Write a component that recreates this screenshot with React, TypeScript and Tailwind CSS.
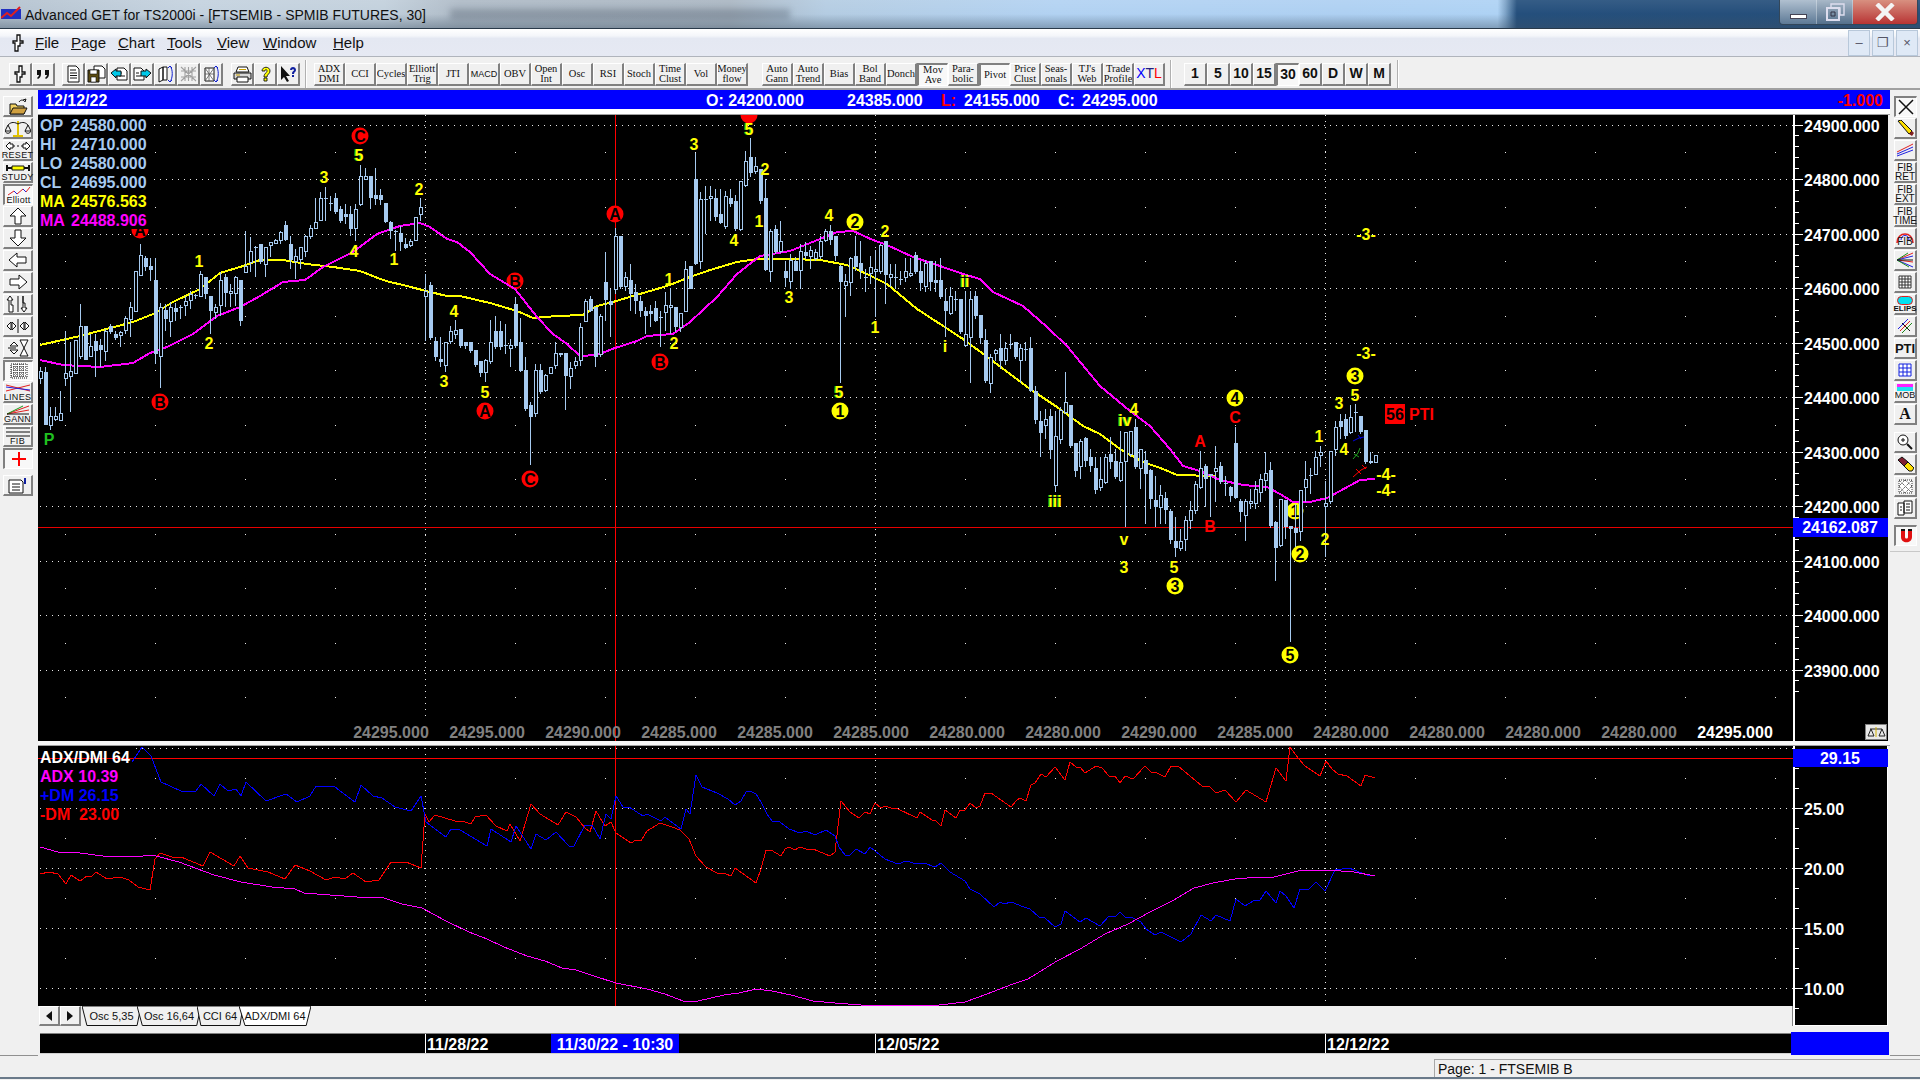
import React from "react";

const C: number[][] = [
[368,372,379,385,0],[368,373,426,426,1],[408,417,426,431,0],[408,417,420,422,0],[392,414,421,422,0],[332,374,379,387,0],[343,372,377,413,0],[341,341,374,374,0],[305,327,357,360,0],[327,327,361,361,1],
[335,347,357,358,0],[335,342,352,378,1],[340,346,351,368,1],[330,332,352,362,0],[325,327,333,335,1],[332,335,339,341,1],[332,333,336,348,0],[317,319,331,335,0],[303,308,320,338,0],[272,272,312,312,0],
[245,256,276,276,0],[257,259,268,272,1],[259,267,271,282,1],[259,281,355,365,1],[304,308,357,389,0],[305,311,320,332,1],[303,308,322,338,0],[304,309,313,322,1],[306,308,309,320,1],[297,302,306,317,0],
[292,295,301,310,0],[295,296,297,300,1],[272,275,297,298,0],[278,278,295,300,1],[297,297,312,335,1],[305,308,313,320,0],[273,281,306,317,0],[275,278,294,308,1],[285,292,294,308,0],[277,278,294,307,0],
[281,281,322,327,1],[232,267,273,274,0],[238,252,263,273,0],[247,248,249,278,1],[245,245,263,265,1],[248,248,265,278,0],[243,243,246,258,0],[240,241,244,245,0],[232,233,241,245,0],[222,226,241,242,1],
[237,245,261,270,1],[250,257,262,280,0],[248,248,260,270,0],[236,237,252,258,0],[226,229,237,240,0],[199,223,229,229,0],[193,199,221,222,0],[188,199,200,222,1],[197,204,205,212,1],[194,199,213,215,1],
[207,210,222,224,1],[205,215,218,225,1],[207,215,230,237,1],[205,210,229,242,0],[166,177,205,207,0],[169,177,180,181,0],[177,177,199,210,1],[169,196,200,206,1],[190,196,201,206,1],[204,204,223,224,1],
[222,223,232,240,1],[231,232,233,252,1],[227,234,243,252,1],[239,245,249,250,1],[240,242,246,248,0],[218,218,241,241,0],[199,208,215,222,0],[275,292,297,342,0],[283,286,339,341,1],[338,342,358,362,1],
[338,360,363,368,1],[343,343,366,373,0],[327,332,342,345,0],[321,331,335,340,0],[330,330,347,349,1],[343,343,347,350,1],[343,343,352,354,1],[351,351,366,368,1],[362,362,374,378,1],[360,361,373,383,0],
[321,343,362,365,0],[317,332,348,350,1],[322,332,348,351,1],[325,346,347,355,1],[340,346,349,368,0],[298,305,347,349,1],[319,343,372,373,1],[358,371,410,412,1],[403,406,418,466,1],[365,371,414,418,0],
[365,371,393,395,1],[375,376,391,393,0],[368,368,374,375,0],[343,354,366,370,0],[354,354,356,358,1],[354,354,377,411,1],[363,369,377,390,0],[358,362,366,370,0],[324,328,361,367,0],[300,302,322,323,0],
[297,300,312,313,1],[308,308,358,368,1],[315,317,355,358,0],[253,283,301,322,1],[290,302,306,338,1],[229,237,290,295,0],[237,237,288,290,1],[273,278,287,292,0],[265,281,295,312,1],[285,293,302,315,1],
[297,302,312,318,1],[308,312,317,335,1],[306,312,315,328,1],[302,309,322,323,1],[312,318,319,348,1],[293,306,313,332,0],[289,306,308,335,0],[308,308,328,333,1],[314,314,328,333,0],[262,270,312,312,0],
[267,267,290,290,1],[154,180,265,266,1],[193,200,262,270,0],[187,200,201,235,1],[187,197,199,222,0],[190,199,218,222,1],[190,215,224,225,1],[192,197,227,230,0],[190,199,205,208,1],[196,202,230,232,1],
[182,182,230,232,0],[152,162,186,188,0],[139,158,174,178,1],[158,167,172,175,0],[170,170,202,205,1],[180,199,271,272,1],[230,232,272,283,0],[226,230,253,255,1],[222,242,252,254,0],[262,272,279,288,1],
[255,261,282,290,0],[258,262,272,272,1],[245,252,271,290,0],[243,253,257,260,1],[247,251,257,270,0],[250,253,259,262,0],[237,242,257,260,0],[230,232,241,243,0],[226,232,241,246,1],[237,237,257,262,1],
[266,267,283,384,1],[275,282,286,318,0],[258,259,283,297,0],[237,257,268,272,1],[242,264,272,280,1],[270,278,279,293,1],[257,268,274,285,0],[251,270,272,318,0],[245,246,272,275,0],[242,242,276,305,1],
[265,275,278,288,0],[265,278,279,290,1],[272,280,281,286,1],[259,272,278,283,0],[259,274,276,278,0],[253,256,273,275,1],[262,272,284,292,1],[261,264,287,293,0],[262,262,283,292,1],[262,281,284,293,1],
[259,281,298,300,1],[290,302,312,338,1],[288,297,314,316,0],[292,300,301,312,1],[300,300,333,335,1],[292,335,346,348,0],[292,300,338,384,0],[292,297,317,320,1],[316,316,339,345,1],[330,341,382,384,1],
[355,358,384,394,0],[350,351,354,362,0],[335,349,362,370,1],[343,349,361,366,0],[335,345,346,350,1],[343,343,358,360,1],[345,349,361,384,0],[343,350,351,362,1],[338,349,392,393,1],[387,392,421,425,1],
[412,422,434,458,1],[410,420,426,440,0],[410,417,451,460,1],[412,437,486,493,0],[408,411,440,445,0],[373,403,413,415,0],[406,406,447,449,1],[444,444,472,478,1],[440,442,467,480,0],[438,439,462,468,1],
[450,458,467,473,1],[458,469,491,495,1],[458,480,488,492,0],[455,458,483,485,0],[438,455,463,470,1],[450,462,478,480,1],[432,463,481,483,0],[433,433,462,528,0],[432,432,455,458,0],[420,428,468,470,1],
[450,450,469,490,0],[452,461,475,525,1],[470,471,500,510,1],[477,501,508,528,1],[486,496,508,525,0],[493,499,511,525,1],[510,512,541,545,1],[518,542,549,558,1],[530,542,549,552,0],[517,521,540,552,0],
[502,511,521,530,0],[482,485,511,515,0],[452,469,488,490,0],[465,467,480,508,1],[475,475,477,518,1],[447,469,472,503,0],[463,467,483,485,1],[477,484,485,497,1],[487,488,497,503,1],[428,444,499,500,1],
[500,502,513,523,1],[500,502,516,542,0],[490,502,504,510,0],[482,490,504,510,0],[475,480,493,503,0],[453,474,481,492,0],[463,471,527,529,1],[522,523,549,582,1],[500,500,546,548,0],[501,501,528,540,1],
[527,527,530,643,1],[505,529,534,548,1],[491,491,532,542,0],[462,480,488,503,0],[469,476,477,495,1],[452,458,475,475,0],[447,453,456,468,0],[482,504,507,558,0],[452,452,502,505,0],[422,428,450,457,0],
[415,422,428,440,1],[415,420,437,440,1],[406,418,433,435,0],[405,413,414,433,1],[417,417,433,435,1],[431,431,463,465,1],[453,462,464,465,1],[456,456,463,464,0],
];

const YEL = "40,346 80,337 133,323 153,315 173,303 200,290 220,274 240,268 260,261 283,261 307,265 333,268 360,272 383,281 390,283 407,287 430,293 447,297 460,297 490,304 517,312 533,319 557,317 583,316 597,307 613,303 633,297 667,287 690,278 710,271 737,263 757,260 790,260 820,261 847,266 867,275 887,285 917,310 937,323 963,340 990,360 1030,390 1057,408 1083,427 1100,435 1120,450 1143,463 1163,470 1177,476 1215,477";
const MAG = "40,361 63,366 100,368 133,364 150,354 167,348 193,335 217,317 240,308 260,297 283,283 305,281 323,268 353,253 377,235 400,227 420,224 430,228 447,240 457,243 470,253 490,275 515,290 537,318 553,335 567,345 580,357 597,356 615,349 637,342 647,337 673,335 690,323 717,298 737,275 760,257 790,252 820,240 837,233 853,232 873,241 887,246 913,258 940,267 963,275 980,280 993,293 1023,307 1047,328 1067,347 1100,387 1130,412 1150,427 1170,450 1183,467 1200,472 1220,481 1243,486 1267,488 1280,495 1293,503 1310,503 1327,499 1340,492 1360,481 1375,480";

const ADX = "40,848 58,853 80,854 103,857 134,858 152,856 179,863 214,876 241,883 272,888 295,890 304,894 330,896 357,898 384,899 402,905 422,909 446,922 469,933 487,940 504,948 527,957 545,962 562,969 576,971 594,977 616,984 647,990 665,995 683,1002 698,1002 724,996 739,994 756,990 772,992 791,996 813,1002 835,1004 861,1006 902,1006 939,1006 965,1003 987,995 1013,985 1028,980 1057,962 1080,950 1105,935 1128,925 1150,913 1172,902 1194,889 1213,884 1235,880 1247,879 1274,878 1298,872 1327,871 1354,873 1375,877";
const BLUE = "132,763 142,748 151,757 161,783 181,792 196,792 201,785 214,797 220,785 228,792 236,790 241,797 246,783 266,802 286,795 297,803 310,797 316,787 335,788 355,803 361,786 373,797 382,799 395,808 411,812 421,797 426,823 446,838 451,830 460,831 487,847 491,830 511,843 516,827 531,850 536,835 546,841 556,833 569,847 574,847 585,826 592,826 600,840 606,815 611,820 616,797 623,808 629,808 643,817 647,815 661,822 665,818 681,830 686,810 690,815 696,776 702,788 717,794 728,800 735,806 741,802 746,793 750,792 756,795 761,803 767,815 772,822 780,823 789,830 800,834 806,832 815,836 826,831 835,837 839,848 845,856 850,856 856,850 865,855 870,848 885,860 898,865 906,862 917,865 924,864 935,868 941,864 950,873 965,882 970,890 980,895 994,908 1000,903 1004,905 1011,903 1024,908 1030,910 1039,918 1044,918 1055,928 1061,925 1065,912 1080,923 1086,919 1100,927 1109,917 1115,918 1120,913 1126,919 1131,918 1141,923 1146,930 1155,936 1161,933 1181,943 1191,935 1201,916 1211,922 1216,916 1230,922 1236,900 1245,907 1253,902 1260,901 1266,892 1276,904 1280,892 1286,897 1294,909 1300,890 1309,890 1316,883 1325,892 1335,871 1349,869 1367,876 1375,877";
const RED = "40,875 49,873 58,875 66,885 71,876 80,882 87,877 91,878 96,873 107,880 120,878 129,881 138,888 150,891 155,860 160,854 172,858 181,858 203,867 210,853 234,867 240,857 248,869 268,873 285,880 295,866 310,872 326,881 335,878 345,880 353,874 366,883 379,881 391,863 406,863 421,869 425,815 429,823 435,816 455,822 462,822 471,825 475,818 486,816 496,827 507,832 510,825 520,842 531,805 540,815 558,826 566,813 576,818 585,829 590,833 596,812 605,827 611,823 616,834 631,844 636,841 641,842 647,832 660,824 672,828 680,831 689,840 696,857 706,868 717,874 726,875 731,877 735,869 756,884 761,870 766,851 771,851 781,857 785,850 789,848 795,851 800,848 806,850 813,850 830,857 835,853 841,802 850,813 859,819 865,813 870,815 875,804 881,809 885,807 891,809 896,809 917,819 920,813 932,821 936,822 941,827 945,811 956,819 960,811 965,811 970,804 976,809 980,807 985,794 991,794 1011,808 1017,801 1020,799 1026,802 1031,786 1035,784 1041,775 1046,778 1055,768 1065,781 1070,763 1076,768 1080,768 1085,774 1096,767 1102,769 1109,777 1115,777 1120,784 1125,777 1133,780 1145,767 1151,773 1155,773 1165,778 1171,767 1178,767 1202,787 1209,787 1216,794 1225,791 1236,803 1246,791 1266,803 1276,769 1286,782 1290,748 1298,759 1305,767 1320,777 1326,762 1332,770 1338,775 1347,777 1361,787 1365,776 1375,779";

const L: [number, number, string, string][] = [
[80,191,"A","r"],[140,231,"A","r"],[160,403,"B","r"],[360,137,"C","r"],[515,282,"B","r"],[485,412,"A","r"],[530,480,"C","r"],[615,215,"A","r"],[660,363,"B","r"],[749,116,"","r"],
[49,440,"P","p"],[199,262,"1","y"],[209,344,"2","y"],[324,178,"3","y"],[354,252,"4","y"],[359,156,"5","g"],[394,260,"1","y"],[419,190,"2","y"],[444,382,"3","y"],[454,312,"4","y"],[485,393,"5","y"],
[674,344,"2","y"],[669,280,"1","y"],[694,145,"3","y"],[749,130,"5","g"],[765,170,"2","y"],[734,241,"4","y"],[759,222,"1","y"],[789,298,"3","y"],[829,216,"4","y"],[885,232,"2","y"],[839,393,"5","g"],[875,328,"1","y"],
[965,282,"ii","g"],[945,347,"i","y"],[1055,502,"iii","g"],[1125,421,"iv","g"],[1134,410,"4","y"],[1124,540,"v","y"],[1124,568,"3","y"],[1174,568,"5","y"],
[855,223,"2","c"],[840,412,"1","c"],[1175,587,"3","c"],[1235,399,"4","c"],[1295,512,"1","c"],[1300,555,"2","c"],[1290,656,"5","c"],[1355,377,"3","c"],
[1200,442,"A","R"],[1210,527,"B","R"],[1235,418,"C","R"],[1325,540,"2","y"],[1319,437,"1","y"],[1339,404,"3","y"],[1344,450,"4","y"],[1355,396,"5","y"],
[1366,235,"-3-","y"],[1366,354,"-3-","y"],[1386,475,"-4-","y"],[1386,491,"-4-","y"],
];

const BOT = ["24295","24295","24290","24285","24285","24285","24280","24280","24290","24285","24280","24280","24280","24280"];
const LEG: [string, string, string][] = [["OP","24580.000","#a6caf0"],["HI","24710.000","#a6caf0"],["LO","24580.000","#a6caf0"],["CL","24695.000","#a6caf0"],["MA","24576.563","#ffff00"],["MA","24488.906","#ff00ff"]];
const PRICE_Y = Array.from({ length: 11 }, (_, i) => 125.5 + i * 54.5);
const HALF_Y = Array.from({ length: 11 }, (_, i) => 153 + i * 54.5);
const F = '"Liberation Sans", Arial, sans-serif';

function Chart() {
  return (
    <svg width={1755} height={626} viewBox="38 116 1755 626" className="block bg-black shrink-0" style={{ fontFamily: F }}>
      {PRICE_Y.map((y) => <line key={y} x1={40} x2={1793} y1={Math.round(y) + 0.5} y2={Math.round(y) + 0.5} stroke="#e8e8e8" strokeDasharray="1 5" />)}
      {HALF_Y.map((y) => <line key={y} x1={65} x2={1793} y1={Math.round(y) + 0.5} y2={Math.round(y) + 0.5} stroke="#e8e8e8" strokeDasharray="1 89" />)}
      {[425, 875, 1325].map((x) => <line key={x} x1={x + 0.5} x2={x + 0.5} y1={116} y2={720} stroke="#e8e8e8" strokeDasharray="1 5" />)}
      <line x1={615.5} x2={615.5} y1={116} y2={742} stroke="#ff0000" />
      <line x1={38} x2={1793} y1={528.5} y2={528.5} stroke="#e80000" />
      {L.filter((l) => l[3] === "c" || l[3] === "r").map(([x, y, t, k], i) => (
        <g key={i}>
          <circle cx={x} cy={y} r={8.5} fill={k === "c" ? "#ffff00" : "#ff0000"} />
          <text x={x} y={y + 6} textAnchor="middle" fontSize={16} fontWeight={700} fill="#000">{t}</text>
        </g>
      ))}
      <g shapeRendering="crispEdges">
        <polyline points={YEL} fill="none" stroke="#ffff00" strokeWidth={2} />
        <polyline points={MAG} fill="none" stroke="#ff00ff" strokeWidth={2} />
        {C.map(([h, t, b, l, f], i) => {
          const x = 40 + i * 5;
          return (
            <g key={i}>
              <line x1={x + 0.5} x2={x + 0.5} y1={h} y2={l} stroke="#a6caf0" />
              {f ? <rect x={x - 1} y={t} width={4} height={Math.max(b - t, 1)} fill="#a6caf0" /> : <rect x={x - 0.5} y={t + 0.5} width={3} height={Math.max(b - t, 1)} fill="#000" stroke="#a6caf0" />}
            </g>
          );
        })}
      </g>
      {L.filter((l) => !"cr".includes(l[3])).map(([x, y, t, k], i) => (
        <g key={i} textAnchor="middle" fontSize={16} fontWeight={700}>
          {k === "g" && <text x={x - 1} y={y + 6} fill="#20c020">{t}</text>}
          <text x={x} y={y + 6} fill={k === "R" ? "#ff0000" : k === "p" ? "#20c020" : "#ffff00"}>{t}</text>
        </g>
      ))}
      <g strokeWidth={1} fill="none">
        <path d="M1353 442l6-3 5-1M1358 436l3 4" stroke="#0000e0" />
        <path d="M1353 460l5-6 2-5M1354 455l5 3" stroke="#20a020" />
        <path d="M1353 478l8-7 6-3M1356 470l5 5M1362 466l4 4" stroke="#ff0000" />
      </g>
      <rect x={1385} y={405} width={20} height={20} fill="#ff0000" />
      <text x={1395} y={421} textAnchor="middle" fontSize={16} fontWeight={700} fill="#000">56</text>
      <text x={1409} y={421} fontSize={16} fontWeight={700} fill="#ff0000">PTI</text>
      <rect x={38} y={116} width={114} height={114} fill="#000" />
      {LEG.map(([a, b, c], i) => (
        <g key={i} fontSize={16} fontWeight={700} fill={c}>
          <text x={40} y={132 + i * 19}>{a}</text>
          <text x={71} y={132 + i * 19}>{b}</text>
        </g>
      ))}
      {BOT.map((t, i) => <text key={i} x={391 + i * 96} y={739} textAnchor="middle" fontSize={16} fontWeight={700} fill="#808080">{t}.000</text>)}
      <text x={1735} y={739} textAnchor="middle" fontSize={16} fontWeight={700} fill="#fff">24295.000</text>
    </svg>
  );
}

function Indicator() {
  return (
    <svg width={1755} height={260} viewBox="38 747 1755 260" className="block bg-black shrink-0" style={{ fontFamily: F }}>
      {[749, 809, 869, 929, 989].map((y) => <line key={y} x1={40} x2={1793} y1={y + 0.5} y2={y + 0.5} stroke="#e8e8e8" strokeDasharray="1 5" />)}
      {[779, 839, 899, 959].map((y) => <line key={y} x1={65} x2={1793} y1={y + 0.5} y2={y + 0.5} stroke="#e8e8e8" strokeDasharray="1 89" />)}
      {[425, 875, 1325].map((x) => <line key={x} x1={x + 0.5} x2={x + 0.5} y1={749} y2={1003} stroke="#e8e8e8" strokeDasharray="1 5" />)}
      <line x1={615.5} x2={615.5} y1={747} y2={1007} stroke="#ff0000" />
      <line x1={38} x2={1793} y1={759.5} y2={759.5} stroke="#ff0000" />
      <g shapeRendering="crispEdges" fill="none">
        <polyline points={RED} stroke="#ff0000" />
        <polyline points={BLUE} stroke="#0000ff" />
        <polyline points={ADX} stroke="#ff00ff" />
      </g>
      <rect x={38} y={749} width={94} height={10} fill="#000" />
      <g fontSize={16} fontWeight={700}>
        <text x={40} y={764} fill="#fff">ADX/DMI 64</text>
        <text x={40} y={783} fill="#ff00ff">ADX 10.39</text>
        <text x={40} y={802} fill="#0000ff">+DM 26.15</text>
        <text x={40} y={821} fill="#ff0000">-DM</text>
        <text x={79} y={821} fill="#ff0000">23.00</text>
      </g>
    </svg>
  );
}

function PriceAxis() {
  const minor = Array.from({ length: 56 }, (_, i) => 125.5 + i * 10.9);
  return (
    <svg width={95} height={626} viewBox="1793 116 95 626" className="block bg-black shrink-0" style={{ fontFamily: F }}>
      <line x1={1794} x2={1794} y1={116} y2={742} stroke="#fff" strokeWidth={2} />
      {minor.map((y, i) => <line key={i} x1={1795} x2={i % 5 === 0 ? 1803 : 1799} y1={Math.round(y) + 0.5} y2={Math.round(y) + 0.5} stroke="#fff" />)}
      {PRICE_Y.map((y, i) => <text key={i} x={1804} y={y + 7} fontSize={16} fontWeight={700} fill="#fff">{24900 - i * 100}.000</text>)}
      <rect x={1793} y={519} width={95} height={19} fill="#0000ff" />
      <text x={1840} y={534} textAnchor="middle" fontSize={16} fontWeight={700} fill="#fff">24162.087</text>
      <rect x={1793} y={700} width={95} height={42} fill="#000" />
      <line x1={1794} x2={1794} y1={700} y2={742} stroke="#fff" strokeWidth={2} />
      <rect x={1865.5} y={725.5} width={21} height={15} fill="#e8e8e8" stroke="#808080" />
      <path d="M1868 737l3-7 3 7zM1879 737l3-7 3 7zM1870 730h12" fill="none" stroke="#222" />
      <line x1={1876} x2={1876} y1={728} y2={738} stroke="#d0b000" />
    </svg>
  );
}

function OscAxis() {
  const t = Array.from({ length: 14 }, (_, i) => 769 + i * 20);
  return (
    <svg width={95} height={280} viewBox="1793 747 95 280" className="block bg-black shrink-0" style={{ fontFamily: F }}>
      <line x1={1794} x2={1794} y1={747} y2={1027} stroke="#fff" strokeWidth={2} />
      <line x1={1887.5} x2={1887.5} y1={747} y2={1027} stroke="#fff" />
      <line x1={1793} x2={1888} y1={1026.5} y2={1026.5} stroke="#fff" />
      {t.map((y) => <line key={y} x1={1795} x2={[809, 869, 929, 989].includes(y) ? 1803 : 1799} y1={y + 0.5} y2={y + 0.5} stroke="#fff" />)}
      {[["25.00", 809], ["20.00", 869], ["15.00", 929], ["10.00", 989]].map(([s, y]) => <text key={s} x={1804} y={(y as number) + 7} fontSize={16} fontWeight={700} fill="#fff">{s}</text>)}
      <rect x={1793} y={750} width={95} height={18} fill="#0000ff" />
      <text x={1840} y={765} textAnchor="middle" fontSize={16} fontWeight={700} fill="#fff">29.15</text>
    </svg>
  );
}

const raised = "border-t border-l border-t-white border-l-white border-r-2 border-b-2 border-r-[#808080] border-b-[#808080] bg-[#f0f0f0]";
const sunken = "border-t-2 border-l-2 border-t-[#808080] border-l-[#808080] border-r border-b border-r-white border-b-white bg-[#f8f8f8]";

const S = (p: { w?: number; h?: number; vb?: string; children: React.ReactNode }) => (
  <svg width={p.w ?? 19} height={p.h ?? 18} viewBox={p.vb ?? "0 0 19 18"} className="block shrink-0">{p.children}</svg>
);

const Pin = ({ h = 18 }: { h?: number }) => (
  <S w={12} h={h} vb="0 0 12 18"><path d="M5 1h3v6h3v2H8v3H6v5H3V9H1V7h4z" fill="#fff" stroke="#111" strokeWidth={1.3} /></S>
);
const Quote = () => <S><path d="M3 5h4v4c0 2-1 4-3 5l-1-1c1-1 2-2 2-3H3zM11 5h4v4c0 2-1 4-3 5l-1-1c1-1 2-2 2-3h-2z" fill="#111" /></S>;
const Doc = () => <S><path d="M4 1h8l3 3v13H4z" fill="#fff" stroke="#111" /><path d="M6 5h6M6 8h7M6 10.500h7M6 13h7" stroke="#111" /></S>;
const Save = () => <S><path d="M7 1h8l3 3v9H7z" fill="#fff" stroke="#111" /><path d="M1 5h11v12H1z" fill="#5a4a10" stroke="#111" /><path d="M3 5h7v4H3zM4 12h5v5H4z" fill="#fff" stroke="#111" strokeWidth={0.6} /></S>;
const ArrL = () => <S><path d="M7 3h7l3 3v9H7z" fill="#fff" stroke="#111" /><path d="M9 8h3M9 11h6" stroke="#111" /><path d="M1 8l5-4v2h5v5H6v2z" fill="#00c8e8" stroke="#111" /></S>;
const ArrR = () => <S><path d="M1 3h7l3 3v9H1z" fill="#fff" stroke="#111" /><path d="M3 8h3M3 11h5" stroke="#111" /><path d="M18 8l-5-4v2H8v5h5v2z" fill="#00c8e8" stroke="#111" /></S>;
const Book = () => <S><path d="M3 4l4-2v13l-4 2zM7 2h4v13H7z" fill="#fff" stroke="#111" /><path d="M14 1c3 3 3 12 0 16M12 3l2-2 2 2M12 15l2 2 2-2" fill="none" stroke="#1020d0" /></S>;
const GrayGrid = () => <S><path d="M2 2l15 14M17 2L2 16M2 6l15 0M2 12l15 0M6 2l0 14M13 2l0 14M9.500 2l0 14" stroke="#a0a0a0" strokeWidth={1.1} fill="none" /></S>;
const Book2 = () => <S><path d="M3 3h9v13H3z" fill="#fff" stroke="#111" /><path d="M3 3l9 13M12 3L3 16M3 9h9M7 3v13" stroke="#555" strokeWidth={0.8} /><path d="M14 1c3 3 3 12 0 16M12 3l2-2 2 2M12 15l2 2 2-2" fill="none" stroke="#1020d0" /></S>;
const Print = () => <S><path d="M5 2h9l2 5H3z" fill="#fff" stroke="#111" /><path d="M1 8h17v6H1z" fill="#d8d8d8" stroke="#111" /><path d="M4 12h11v5H4z" fill="#fff" stroke="#111" /><path d="M6 4.500h7M3 10h4" stroke="#c8a000" /></S>;
const Help = () => <S><path d="M6 6c0-5 8-5 8 0 0 3-3 3-3 6H8c0-4 3-4 3-6s-2-2-2 0zM8 13h3v3H8z" fill="#ffff00" stroke="#111" strokeWidth={0.9} /></S>;
const WhatsThis = () => <S><path d="M2 1v14l3-3 3 5 2-1-3-5h4z" fill="#111" /><path d="M11 5c0-4 6-4 6 0 0 2-2 2-2 4h-2c0-3 2-3 2-4s-2-1-2 0zM13 10h2v2h-2z" fill="#1020a0" /></S>;

function IconBtn({ children, w = "w-[23px]", pressed }: { children: React.ReactNode; w?: string; pressed?: boolean }) {
  return <div className={`${w} h-[23px] flex items-center justify-center shrink-0 ${pressed ? sunken : raised}`}>{children}</div>;
}
function TxtBtn({ l, pressed, small }: { l: string[]; pressed?: boolean; small?: boolean }) {
  return (
    <div className={`w-[31px] h-[23px] flex flex-col items-center justify-center shrink-0 overflow-hidden leading-[10px] text-[#111] ${small ? "text-[9px] font-['Liberation_Sans',sans-serif]" : "text-[10.5px] font-['Liberation_Serif',serif]"} ${pressed ? sunken : raised}`}>
      {l.map((t) => <span key={t}>{t}</span>)}
    </div>
  );
}
const Sep = ({ ml }: { ml: string }) => <div className={`${ml} w-[2px] h-[28px] border-l border-l-[#b0b0b0] border-r border-r-white shrink-0`} />;

const T1: [string[], boolean?][] = [[["ADX", "DMI"]], [["CCI"]], [["Cycles"]], [["Elliott", "Trig"]], [["JTI"]], [["MACD"]], [["OBV"]], [["Open", "Int"]], [["Osc"]], [["RSI"]], [["Stoch"]], [["Time", "Clust"]], [["Vol"]], [["Money", "flow"]]];
const T2: [string[], boolean?][] = [[["Auto", "Gann"]], [["Auto", "Trend"]], [["Bias"]], [["Bol", "Band"]], [["Donch"]], [["Mov", "Ave"], true], [["Para-", "bolic"]], [["Pivot"], true], [["Price", "Clust"]], [["Seas-", "onals"]], [["TJ's", "Web"]], [["Trade", "Profile"]]];
const NUMS = ["1", "5", "10", "15", "30", "60", "D", "W", "M"];

function Toolbar() {
  return (
    <div className="h-[33px] pt-[3px] bg-[#f0f0f0] flex items-center shrink-0 border-b-2 border-b-[#a0a0a0]">
      <div className="ml-[9px] flex"><IconBtn><Pin /></IconBtn><IconBtn><Quote /></IconBtn></div>
      <div className="ml-[7px] flex">
        <IconBtn><Doc /></IconBtn><IconBtn><Save /></IconBtn><IconBtn><ArrL /></IconBtn><IconBtn><ArrR /></IconBtn><IconBtn><Book /></IconBtn><IconBtn><GrayGrid /></IconBtn><IconBtn><Book2 /></IconBtn>
      </div>
      <div className="ml-[8px] flex"><IconBtn><Print /></IconBtn><IconBtn><Help /></IconBtn><IconBtn><WhatsThis /></IconBtn></div>
      <Sep ml="ml-[5px]" />
      <div className="ml-[7px] flex">{T1.map(([l, p]) => <TxtBtn key={l[0]} l={l} pressed={p} small={l[0] === "MACD"} />)}</div>
      <div className="ml-[14px] flex">
        {T2.map(([l, p]) => <TxtBtn key={l[0] + l[1]} l={l} pressed={p} />)}
        <div className={`w-[31px] h-[23px] flex items-center justify-center shrink-0 text-[14px] font-['Liberation_Sans',sans-serif] ${raised}`}>
          <span className="text-[#0000ff]">X</span><span className="text-[#202080]">T</span><span className="text-[#ff0000]">L</span>
        </div>
      </div>
      <Sep ml="ml-[5px]" />
      <div className="ml-[12px] flex">
        {NUMS.map((n) => <div key={n} className={`w-[23px] h-[23px] flex items-center justify-center shrink-0 text-[14px] font-bold text-[#111] font-['Liberation_Sans',sans-serif] ${n === "30" ? sunken : raised}`}>{n}</div>)}
      </div>
      <Sep ml="ml-[6px]" />
    </div>
  );
}

const lab = "text-[9px] leading-[9px] text-[#111] font-['Liberation_Sans',sans-serif] tracking-[0.3px]";
const Cap = ({ t, children }: { t: string; children: React.ReactNode }) => <div className="flex flex-col items-center">{children}<span className={lab}>{t}</span></div>;

const Left: [React.ReactNode, boolean?][] = [
  [<S w={20} h={17} vb="0 0 20 17"><path d="M2 6h6l1 2h7v8H2z" fill="#f0d060" stroke="#111" /><path d="M2 16l3-6h14l-3 6z" fill="#d0a040" stroke="#111" /><path d="M11 4c2-3 5-2 6 0M17 4l1-3-3 1" fill="none" stroke="#111" /></S>],
  [<S w={26} h={17} vb="0 0 26 17"><path d="M13 1v14M8 16h10" stroke="#e0c000" strokeWidth={2} /><path d="M13 4C8 1 5 3 3 5M13 4c5-3 8-1 10 1M3 5l-3 6h6zM23 5l-3 6h6zM0 11c1 3 5 3 6 0M20 11c1 3 5 3 6 0" fill="none" stroke="#111" /></S>],
  [<Cap t="RESET"><S w={26} h={10} vb="0 0 26 10"><path d="M1 5l4-4v2h3v4H5v2zM25 5l-4-4v2h-3v4h3v2z" fill="#fff" stroke="#111" /><path d="M8 5h10" stroke="#111" strokeDasharray="2 2" /></S></Cap>],
  [<Cap t="STUDY"><S w={26} h={10} vb="0 0 26 10"><path d="M2 2v6M24 2v6M2 5h22" stroke="#111" strokeWidth={2} /><path d="M7 3h12v4H7z" fill="#ffff00" stroke="#111" /></S></Cap>],
  [<Cap t="Elliott"><S w={26} h={10} vb="0 0 26 10"><path d="M2 9l6-4 3 3 6-5 3 3 4-5" fill="none" stroke="#e02020" /><path d="M8 5l3 3M20 6l-3-3" stroke="#2020e0" /></S></Cap>, true],
  [<S w={20} h={18} vb="0 0 20 18"><path d="M10 1l8 8h-5v8H7V9H2z" fill="#fff" stroke="#111" /></S>],
  [<S w={20} h={18} vb="0 0 20 18"><path d="M10 17l8-8h-5V1H7v8H2z" fill="#fff" stroke="#111" /></S>],
  [<S w={20} h={18} vb="0 0 20 18"><path d="M1 9l8-7v4h9v6H9v4z" fill="#fff" stroke="#111" /></S>],
  [<S w={20} h={18} vb="0 0 20 18"><path d="M19 9l-8-7v4H2v6h9v4z" fill="#fff" stroke="#111" /></S>],
  [<S w={24} h={18} vb="0 0 24 18"><path d="M3 17V5H1l3-4 3 4H5v5h2v7zM17 1v12h-2l3 4 3-4h-2V8h-2V1z" fill="#fff" stroke="#111" /><path d="M12 1v16" stroke="#111" /></S>],
  [<S w={24} h={14} vb="0 0 24 14"><path d="M1 7l4-4v8zM6 3l4 4-4 4zM18 3l-4 4 4 4zM19 3l4 4-4 4z" fill="#fff" stroke="#111" /><path d="M12 0v14" stroke="#111" /></S>],
  [<S w={24} h={18} vb="0 0 24 18"><path d="M4 7l4-4 4 4zM4 11l4 4 4-4z" fill="#fff" stroke="#111" /><path d="M14 1h8l-4 8 4 8h-8l4-8z" fill="#fff" stroke="#111" /><path d="M2 9h8" stroke="#111" /></S>],
  [<S w={18} h={16} vb="0 0 18 16"><path d="M1 1h16v14H1zM1 4h16M1 7h16M1 10h16M1 13h16M4 1v14M7 1v14M10 1v14M13 1v14" fill="#fff" stroke="#111" strokeDasharray="1 1" /></S>, true],
  [<Cap t="LINES"><S w={26} h={10} vb="0 0 26 10"><path d="M1 2l24 6M1 8l24-6" stroke="#e02020" /><path d="M1 4l24 3" stroke="#2020e0" /></S></Cap>],
  [<Cap t="GANN"><S w={26} h={10} vb="0 0 26 10"><path d="M2 9L24 1M2 9L24 5" stroke="#e02020" /><path d="M2 9L18 1" stroke="#1a9a1a" /><path d="M2 9h22" stroke="#111" /></S></Cap>],
  [<Cap t="FIB"><S w={26} h={11} vb="0 0 26 11"><path d="M1 2h24M1 6h24M1 10h24" stroke="#111" /></S></Cap>],
  [<S w={16} h={16} vb="0 0 16 16"><path d="M8 1v14M1 8h14" stroke="#ff0000" strokeWidth={2} /></S>, true],
];

function LeftBar() {
  return (
    <div className="w-[38px] shrink-0 bg-[#f0f0f0] pt-[6px] pl-[3px] border-b border-b-[#909090]">
      {Left.map(([ic, p], i) => <div key={i} className={`w-[30px] h-[21px] mb-[1px] flex items-center justify-center ${p ? sunken : raised}`}>{ic}</div>)}
      <div className={`w-[30px] h-[21px] mt-[6px] flex items-center justify-center ${raised}`}>
        <S w={22} h={17} vb="0 0 22 17"><path d="M2 3h12l2 2v11H2z" fill="#fff" stroke="#111" /><path d="M5 7h8M5 10h8M5 13h8" stroke="#111" /><path d="M18 1v6" stroke="#1020a0" strokeWidth={2} /></S>
      </div>
    </div>
  );
}

const fibT = (a: string, b: string) => <div className="flex flex-col items-center text-[10px] leading-[9px] text-[#111] font-['Liberation_Sans',sans-serif]"><span>{a}</span><span>{b}</span></div>;
const RightA: React.ReactNode[] = [
  <S w={16} h={16} vb="0 0 16 16"><path d="M1 1l14 14M15 1L1 15" stroke="#111" strokeWidth={1.5} /></S>,
  <S w={17} h={16} vb="0 0 17 16"><path d="M1 1l3-1 11 11-3 3z" fill="#ffe000" stroke="#111" /><path d="M12 14l3-3 2 2-2 3z" fill="#802020" /></S>,
  <S w={18} h={14} vb="0 0 18 14"><path d="M1 9L17 1" stroke="#e02020" /><path d="M1 11L17 4" stroke="#2020e0" /><path d="M1 13L17 7" stroke="#2020e0" /></S>,
  fibT("FIB", "RET"), fibT("FIB", "EXT"), fibT("FIB", "TIME"),
  <div className="relative w-[18px] h-[18px] flex items-end justify-center"><svg width={18} height={18} viewBox="0 0 18 18" className="absolute inset-0"><path d="M1 14C1 2 17 2 17 14" fill="none" stroke="#e02020" strokeWidth={1.5} /><path d="M5 11C5 5 13 5 13 11" fill="none" stroke="#2020e0" /></svg><span className="relative text-[10px] leading-[10px] text-[#111] font-['Liberation_Sans',sans-serif]">FIB</span></div>,
  <S w={18} h={16} vb="0 0 18 16"><path d="M1 8L17 1M1 8l16 2" stroke="#e02020" /><path d="M1 8l16-4M1 8l16 7" stroke="#2020e0" /><path d="M1 8L12 1M1 8l12 7" stroke="#1a8a1a" /><path d="M1 8h16" stroke="#111" /></S>,
  <S w={14} h={14} vb="0 0 14 14"><path d="M1 1h12v12H1zM1 4h12M1 7h12M1 10h12M4 1v12M7 1v12M10 1v12" fill="#fff" stroke="#333" /></S>,
  <div className="flex flex-col items-center"><div className="w-[16px] h-[9px] rounded-full bg-[#00e0f0] border border-[#e02020]" /><span className="text-[8px] leading-[8px] font-bold text-[#111] font-['Liberation_Sans',sans-serif]">ELIPS</span></div>,
  <S w={15} h={15} vb="0 0 15 15"><path d="M0 10L10 0" stroke="#2020e0" /><path d="M2 12L12 2" stroke="#e02020" /><path d="M4 14L14 4" stroke="#1a8a1a" /><path d="M4 4l8 8" stroke="#111" /></S>,
  <span className="text-[13px] leading-[13px] font-bold text-[#111] font-['Liberation_Sans',sans-serif]">PTI</span>,
  <S w={14} h={14} vb="0 0 14 14"><path d="M1 1h12v12H1zM1 5h12M1 9h12M5 1v12M9 1v12" fill="#fff" stroke="#1020e0" /></S>,
  <div className="flex flex-col items-center w-[16px]"><div className="w-full h-[3px] bg-[#ff20ff]" /><div className="w-full h-[4px] bg-[#20e0f0]" /><span className="text-[9px] leading-[9px] text-[#111] font-['Liberation_Sans',sans-serif]">MOB</span></div>,
  <span className="text-[16px] leading-[16px] font-bold text-[#111] font-['Liberation_Serif',serif]">A</span>,
];
const RightB: React.ReactNode[] = [
  <S w={16} h={16} vb="0 0 16 16"><circle cx={6} cy={6} r={5} fill="#fff" stroke="#111" /><path d="M10 10l5 5" stroke="#111" strokeWidth={2} /><path d="M4 6h4M6 4v4" stroke="#111" /></S>,
  <S w={17} h={16} vb="0 0 17 16"><path d="M1 4l4-3 6 5-4 4z" fill="#802030" stroke="#111" /><path d="M7 10l4-4 6 6-2 3h-3z" fill="#ffe000" stroke="#111" /></S>,
  <S w={15} h={15} vb="0 0 15 15"><path d="M1 1h13v13H1zM1 1l13 13M14 1L1 14M7 1L1 7M7 1l7 6M1 7l6 7M14 7l-7 7" fill="#fff" stroke="#333" strokeDasharray="1 1" /></S>,
  <S w={16} h={16} vb="0 0 16 16"><path d="M1 3h6v12H1zM7 1h8v12H7z" fill="#fff" stroke="#111" /><path d="M9 4h4M9 7h4M9 10h4M3 7h2M3 10h2" stroke="#111" /></S>,
];

function RightBar() {
  return (
    <div className="w-[30px] shrink-0 bg-[#f0f0f0] border-b border-b-[#909090]">
      <div className="h-[462px] pt-[6px] pl-[4px] border-b border-b-[#c8c8c8]">
        {RightA.map((ic, i) => <div key={i} className={`w-[23px] h-[21px] mb-[1px] flex items-center justify-center ${i === 0 ? sunken : raised}`}>{ic}</div>)}
        <div className="h-[6px]" />
        {RightB.map((ic, i) => <div key={i} className={`w-[23px] h-[21px] mb-[1px] flex items-center justify-center ${raised}`}>{ic}</div>)}
        <div className="h-[5px]" />
        <div className={`w-[23px] h-[21px] flex items-center justify-center ${sunken}`}>
          <S w={15} h={16} vb="0 0 15 16"><path d="M2 1v8c0 7 11 7 11 0V1H9v8c0 2-3 2-3 0V1z" fill="#e01010" /><path d="M2 1h4v2H2zM9 1h4v2H9z" fill="#111" /></S>
        </div>
      </div>
    </div>
  );
}

function Tab({ t, w, on }: { t: string; w: string; on?: boolean }) {
  return (
    <div className={`relative ${w} h-[20px] -mr-[4px] flex items-center justify-center text-[11px] text-[#111]`}>
      <svg viewBox="0 0 60 20" preserveAspectRatio="none" className="absolute inset-0 w-full h-full">
        <polygon points="0,0 60,0 56,19.500 5,19.500" fill={on ? "#fff" : "#f0f0f0"} stroke="#111" strokeWidth={1} vectorEffect="non-scaling-stroke" />
      </svg>
      <span className="relative">{t}</span>
    </div>
  );
}

export default function App() {
  return (
    <div className="w-[1920px] h-[1080px] overflow-hidden flex flex-col bg-[#f0f0f0] font-['Liberation_Sans',Arial,sans-serif]">
      <div className="h-[28px] shrink-0 flex items-center relative bg-[linear-gradient(180deg,rgba(255,255,255,0.08)_0%,transparent_50%,rgba(60,80,100,0.4)_100%),linear-gradient(90deg,#b4c2cf_0%,#c4d2df_10%,#c2d0dc_20%,#aebac6_24%,#aab6c2_38%,#b4cce2_43%,#b2d2f2_55%,#aed0f2_70%,#aed2f4_78%,#7ea4c8_78.400%,#244f7c_79%,#264f7a_100%)]">
        <div className="ml-[1px] w-[21px] h-[18px] shrink-0">
          <svg width={21} height={18} viewBox="0 0 21 18"><path d="M0 4h20v10H0z" fill="#2030c0" /><path d="M0 13l6-5 4 3 9-9" fill="none" stroke="#e02020" strokeWidth={2} /></svg>
        </div>
        <span className="ml-[3px] pt-[2px] text-[14px] text-[#101010] whitespace-nowrap">Advanced GET for TS2000i - [FTSEMIB - SPMIB FUTURES, 30]</span>
        <div className="ml-[24px] w-[340px] h-[10px] bg-[#3a4a5a]/30 blur-[3px]" />
        <div className="absolute right-[2px] top-0 h-[25px] flex border border-[#33475a] border-t-0 rounded-b-[4px] overflow-hidden">
          <div className="w-[37px] flex items-end justify-center pb-[5px] border-r border-white/30 bg-[linear-gradient(180deg,#b0c0d0,#5e7a96)]"><div className="w-[17px] h-[5px] bg-white border border-[#445]" /></div>
          <div className="w-[36px] flex items-center justify-center border-r border-white/30 bg-[linear-gradient(180deg,#a8b8c8,#54708c)]">
            <svg width={20} height={18} viewBox="0 0 20 18"><path d="M6 1h13v11h-4V5H6z" fill="none" stroke="#dde" strokeWidth={1.4} /><path d="M2 5h12v12H2z" fill="none" stroke="#dde" strokeWidth={2} /><path d="M6 9h4v4H6z" fill="none" stroke="#334" /></svg>
          </div>
          <div className="w-[64px] flex items-center justify-center bg-[linear-gradient(180deg,#d89080,#b83434)]">
            <svg width={22} height={18} viewBox="0 0 22 18"><path d="M3 1l16 16M19 1L3 17" stroke="#f4f4f4" strokeWidth={4.500} /></svg>
          </div>
        </div>
      </div>
      <div className="h-[1px] shrink-0 bg-[#2a3a4a]" />
      <div className="h-[28px] shrink-0 flex items-center text-[15px] text-[#111] bg-[linear-gradient(180deg,#ffffff_0%,#f4f6fa_25%,#e4e8f2_35%,#e6e9f3_100%)] border-b border-b-[#b0b4bc] relative">
        <div className="ml-[12px] w-[20px]"><Pin h={22} /></div>
        <span className="ml-[3px] w-[36px] pt-[2px]"><u>F</u>ile</span>
        <span className="w-[47px] pt-[2px]"><u>P</u>age</span>
        <span className="w-[49px] pt-[2px]"><u>C</u>hart</span>
        <span className="w-[50px] pt-[2px]"><u>T</u>ools</span>
        <span className="w-[46px] pt-[2px]"><u>V</u>iew</span>
        <span className="w-[70px] pt-[2px]"><u>W</u>indow</span>
        <span className="pt-[2px]"><u>H</u>elp</span>
        <div className="absolute right-[2px] top-[1px] flex gap-[2px]">
          {["–", "❐", "×"].map((g, i) => <div key={i} className="w-[22px] h-[26px] flex items-center justify-center bg-[#dfe9f6] border border-[#b8c8da] text-[13px] text-[#556]">{g}</div>)}
        </div>
      </div>
      <Toolbar />
      <div className="h-[966px] shrink-0 flex">
        <LeftBar />
        <div className="w-[1852px] shrink-0 flex flex-col">
          <div className="h-[19px] shrink-0 pt-[2px] bg-[#0000ff] flex items-center text-[16px] font-bold text-white pl-[7px] whitespace-nowrap">
            <span className="w-[661px]">12/12/22</span>
            <span className="w-[141px]">O: 24200.000</span>
            <span className="w-[94px]">24385.000</span>
            <span className="w-[23px] text-[#ff0000]">L:</span>
            <span className="w-[94px]">24155.000</span>
            <span className="w-[24px]">C:</span>
            <span>24295.000</span>
            <span className="ml-auto pr-[7px] text-[#ff0000]">-1.000</span>
          </div>
          <div className="h-[6px] shrink-0 bg-white border-b border-b-[#a0a0a0]" />
          <div className="h-[626px] shrink-0 flex"><Chart /><PriceAxis /></div>
          <div className="h-[5px] shrink-0 bg-[#f8f8f8] border-b border-b-[#a0a0a0]" />
          <div className="h-[280px] shrink-0 flex">
            <div className="w-[1755px] shrink-0 flex flex-col">
              <Indicator />
              <div className="h-[20px] flex items-start pl-[1px] bg-[#f0f0f0] border-r border-r-[#808080]">
                <div className={`w-[21px] h-[20px] flex items-center justify-center ${raised}`}><svg width={6} height={10} viewBox="0 0 6 10"><path d="M6 0v10L0 5z" fill="#111" /></svg></div>
                <div className={`w-[21px] h-[20px] flex items-center justify-center ${raised}`}><svg width={6} height={10} viewBox="0 0 6 10"><path d="M0 0v10l6-5z" fill="#111" /></svg></div>
                <div className="ml-[1px] flex">
                  <Tab t="Osc 5,35" w="w-[59px]" />
                  <Tab t="Osc 16,64" w="w-[64px]" />
                  <Tab t="CCI 64" w="w-[46px]" />
                  <Tab t="ADX/DMI 64" w="w-[72px]" on />
                </div>
              </div>
            </div>
            <OscAxis />
          </div>
          <div className="h-[6px] shrink-0 bg-[#f0f0f0]" />
          <div className="h-[23px] shrink-0 flex text-[16px] font-bold text-white whitespace-nowrap">
            <div className="w-[1753px] shrink-0 h-[23px] pl-[2px] bg-[#f0f0f0]">
              <div className="h-[21px] mt-[1px] flex items-center bg-black border-t border-t-[#808080] border-b border-b-[#d0d0d0]">
                <div className="w-[385px] shrink-0" />
                <div className="w-[126px] shrink-0 pl-[1px] pt-[2px] border-l border-l-white h-full flex items-center">11/28/22</div>
                <div className="w-[128px] shrink-0 pt-[2px] bg-[#0000ff] h-full flex items-center justify-center">11/30/22 - 10:30</div>
                <div className="w-[196px] shrink-0" />
                <div className="w-[450px] shrink-0 pl-[1px] pt-[2px] border-l border-l-white h-full flex items-center">12/05/22</div>
                <div className="flex-1 pl-[1px] pt-[2px] border-l border-l-white h-full flex items-center">12/12/22</div>
              </div>
            </div>
            <div className="w-[98px] shrink-0 h-[23px] bg-[#0000ff]" />
          </div>
        </div>
        <RightBar />
      </div>
      <div className="h-[21px] shrink-0 flex justify-end bg-[#f0f0f0] pt-[3px]">
        <div className="w-[486px] h-[18px] border-t border-l border-[#a8a8a8] pl-[3px] text-[14px] leading-[18px] text-[#111]">Page: 1 - FTSEMIB B</div>
      </div>
      <div className="h-[2px] shrink-0 bg-[#6a7a8a]" />
    </div>
  );
}
